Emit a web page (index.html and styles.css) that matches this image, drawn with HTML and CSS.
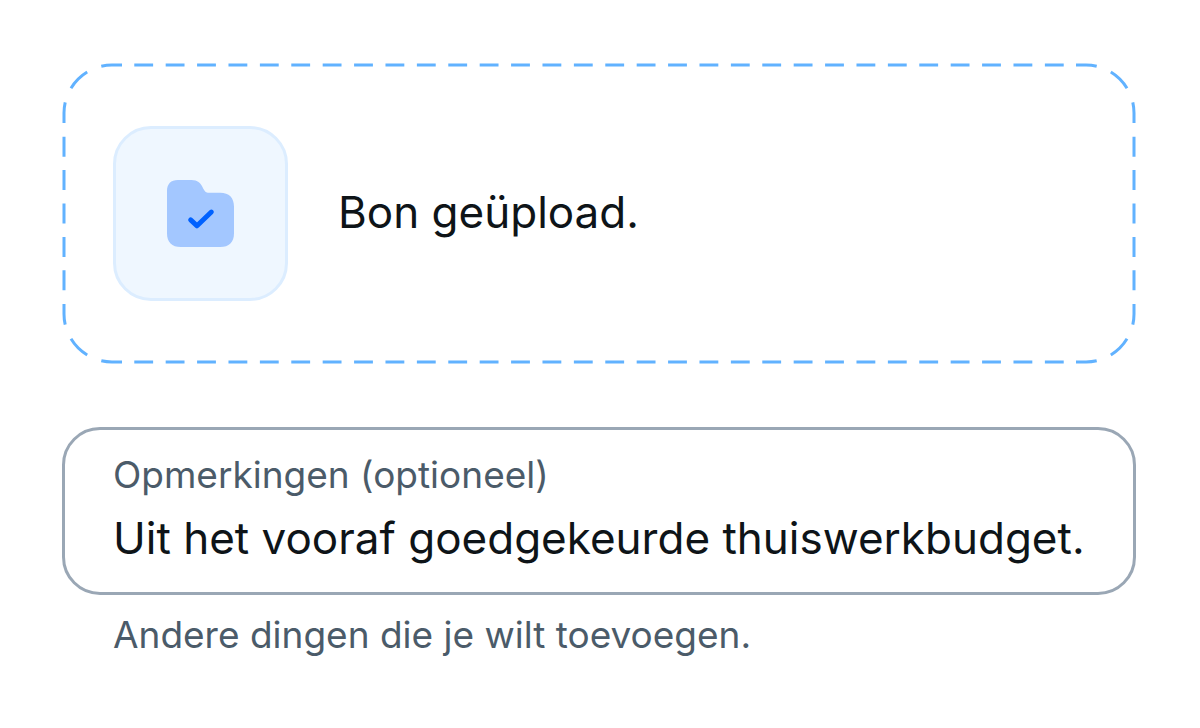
FILE: index.html
```
<!DOCTYPE html>
<html lang="nl">
<head>
  <meta charset="UTF-8" />
  <meta name="viewport" content="width=device-width, initial-scale=1" />
  <title>Bon</title>
  <link rel="stylesheet" href="styles.css">
</head>
<body>
  <form class="receipt-form">
    <div class="upload-box">
      <!-- dashed outline: four stretching edges, four fixed corners -->
      <svg class="upload-outline" aria-hidden="true">
        <defs>
          <path id="corner" d="M58 0H48A48 48 0 0 0 37.3 1.2M23.2 7A48 48 0 0 0 7 23.2M1.2 37.3A48 48 0 0 0 0 48V58" />
        </defs>
        <svg class="edge-h" x="64" y="0"><line x2="100%" pathLength="300" /></svg>
        <svg class="edge-h" x="64" y="100%"><line x2="100%" pathLength="300" /></svg>
        <svg class="edge-v" x="0" y="65"><line y2="100%" pathLength="50" /></svg>
        <svg class="edge-v" x="100%" y="65"><line y2="100%" pathLength="50" /></svg>
        <svg class="corner"><use href="#corner" /></svg>
        <svg class="corner" x="100%"><use href="#corner" transform="scale(-1 1)" /></svg>
        <svg class="corner" y="100%"><use href="#corner" transform="scale(1 -1)" /></svg>
        <svg class="corner" x="100%" y="100%"><use href="#corner" transform="scale(-1 -1)" /></svg>
      </svg>
      <div class="upload-tile">
        <svg class="folder-icon" viewBox="0 0 68 68" aria-hidden="true">
          <path class="folder" d="M0 11C0 4 4 0 11 0H25C31 0 34 3 36 7C38 11 39 13 43 13H54C63 13 68 18 68 27V54C68 63 63 68 54 68H14C5 68 0 63 0 54Z" />
          <path class="check" d="M24 40.500L30.500 46.500L45 32.500" />
        </svg>
      </div>
      <p class="upload-status">Bon geüpload.</p>
    </div>

    <div class="field">
      <label for="notes">Opmerkingen (optioneel)</label>
      <input type="text" id="notes" value="Uit het vooraf goedgekeurde thuiswerkbudget." aria-describedby="notes-hint">
    </div>
    <p class="hint" id="notes-hint">Andere dingen die je wilt toevoegen.</p>
  </form>
</body>
</html>
```

FILE: styles.css
```
* {
  box-sizing: border-box;
}
body {
  margin: 0;
  background: #fff;
  color: #0e1418;
  font-family: Inter, "Liberation Sans", sans-serif;
}
p {
  margin: 0;
}
.receipt-form {
  padding: 63px 64px 63px 62px;
}

.upload-box {
  position: relative;
  display: flex;
  align-items: center;
  gap: 50px;
  padding: 63px 51px;
}
.upload-outline {
  position: absolute;
  top: 2px;
  left: 2px;
  width: calc(100% - 4px);
  height: calc(100% - 4px);
  overflow: visible;
  fill: none;
  stroke: #61b2ff;
  stroke-width: 3px;
}
.upload-outline svg {
  overflow: visible;
}
.edge-h {
  width: calc(100% - 128px);
  height: 1px;
  stroke-dasharray: 6 4;
  stroke-dashoffset: -2;
}
.edge-v {
  width: 1px;
  height: calc(100% - 130px);
  stroke-dasharray: 6 4;
  stroke-dashoffset: -2;
}
.upload-tile {
  display: flex;
  align-items: center;
  justify-content: center;
  flex: none;
  width: 175px;
  height: 175px;
  border: 3px solid #dcedff;
  border-radius: 38px;
  background: #eff7ff;
}
.folder-icon {
  width: 67px;
  height: 67px;
}
.folder {
  fill: #a3c7ff;
}
.check {
  fill: none;
  stroke: #0061ff;
  stroke-width: 5px;
  stroke-linecap: round;
  stroke-linejoin: round;
}
.upload-status {
  padding-bottom: 4px;
  font-size: 44px;
  line-height: 64px;
}

.field {
  margin-top: 63px;
  padding: 18px 48px 22px;
  border: 3px solid #9aa7b5;
  border-radius: 38px;
}
.field label {
  display: block;
  margin-bottom: 4px;
  color: #4b5b69;
  font-size: 37px;
  line-height: 54px;
}
.field input {
  display: block;
  width: 100%;
  height: 64px;
  padding: 0;
  border: 0;
  outline: 0;
  background: none;
  color: inherit;
  font-family: inherit;
  font-size: 44px;
  line-height: 64px;
}
.hint {
  margin-top: 13px;
  padding: 0 51px;
  color: #4b5b69;
  font-size: 37px;
  line-height: 54px;
}
```
